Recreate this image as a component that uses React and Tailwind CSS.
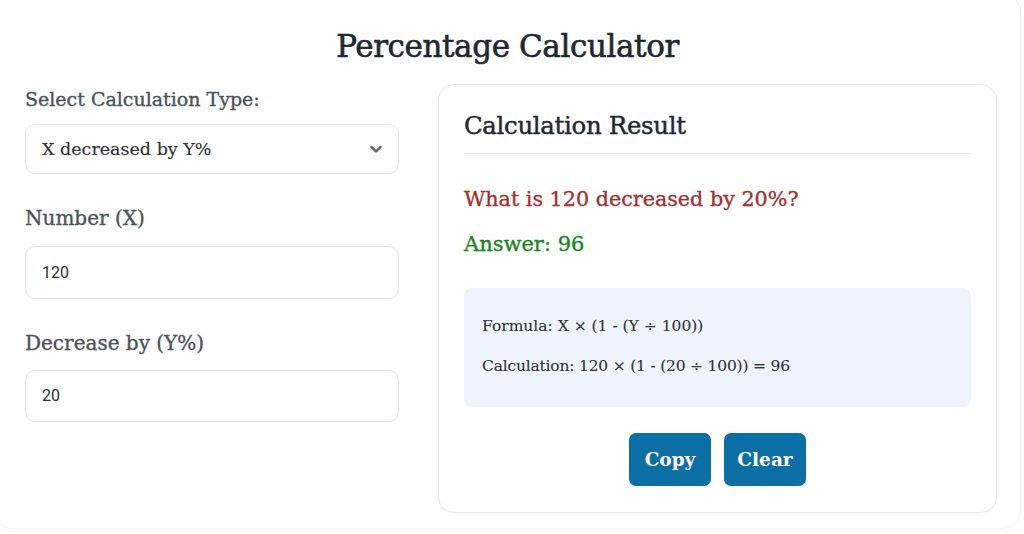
import React from 'react';

const slab = { fontFamily: '"DejaVu Serif", "Liberation Serif", serif' };

const InputBox = ({ value, h = 'h-[53px]' }) => (
  <div className={`${h} rounded-[10px] border border-[#e3e5e8] flex items-center px-4 text-[16px] text-[#2b2f33] font-['Roboto',sans-serif] [-webkit-text-stroke:0px]`}>
    {value}
  </div>
);

export default function App() {
  return (
    <div className="w-[1024px] h-[534px] bg-white overflow-hidden [-webkit-text-stroke:0.35px]" style={slab}>
      <div className="ml-[-6px] mt-[-6px] w-[1027px] h-[535px] rounded-[18px] border border-[#f1f1f1] pt-[33px]">
        <h1 className="text-center text-[31px] leading-[36px] text-[#1e2833] tracking-[-0.4px] [-webkit-text-stroke:0.6px]">Percentage Calculator</h1>

        <div className="flex gap-[39px] pl-[30px] pr-[23px] mt-[20px]">
          {/* inputs */}
          <div className="w-[374px] pt-[6px] flex flex-col">
            <label className="text-[#4b5259] text-[19px] leading-none mb-[15px]">Select Calculation Type:</label>
            <div className="h-[50px] rounded-[10px] border border-[#e3e5e8] flex items-center justify-between pl-4 pr-[14px] text-[17.5px] text-[#2b2f33] [-webkit-text-stroke:0.15px]">
              <span>X decreased by Y%</span>
              <svg width="16" height="16" viewBox="0 0 16 16" fill="none" stroke="#5a6068" strokeWidth="2.4" strokeLinecap="round" strokeLinejoin="round">
                <path d="M3.5 6l4.5 4.5L12.5 6" />
              </svg>
            </div>

            <label className="mt-[34px] mb-[18px] text-[#4b5259] text-[20px] leading-none">Number (X)</label>
            <InputBox value="120" />

            <label className="mt-[34px] mb-[17px] text-[#4b5259] text-[20px] leading-none">Decrease by (Y%)</label>
            <InputBox value="20" h="h-[52px]" />
          </div>

          {/* result card */}
          <div className="flex-1 h-[429px] rounded-[16px] border border-[#e8e9eb] px-[25px] pt-[29px] shadow-[0_1px_3px_rgba(0,0,0,0.03)]">
            <h2 className="text-[24.4px] leading-none text-[#1e2833] pb-[15px] border-b border-[#e9eaec] tracking-[-0.3px] [-webkit-text-stroke:0.45px]">Calculation Result</h2>
            <p className="mt-[35px] text-[20.7px] leading-none text-[#a2302e]">What is 120 decreased by 20%?</p>
            <p className="mt-[24px] text-[21px] leading-none text-[#16841a]">Answer: 96</p>

            <div className="mt-[33px] h-[119px] rounded-[8px] bg-[#eef3fd] px-[18px] pt-[31px] text-[15.5px] leading-none text-[#2d3136] [-webkit-text-stroke:0.1px]">
              <p>Formula: X × (1 - (Y ÷ 100))</p>
              <p className="mt-[24px] tracking-[-0.2px]">Calculation: 120 × (1 - (20 ÷ 100)) = 96</p>
            </div>

            <div className="flex justify-center gap-[13px] mt-[26px] [-webkit-text-stroke:0px]">
              <button className="h-[53px] w-[82px] rounded-[7px] bg-[#0b6ea5] text-white text-[18.5px] font-bold">Copy</button>
              <button className="h-[53px] w-[82px] rounded-[7px] bg-[#0b6ea5] text-white text-[18.5px] font-bold">Clear</button>
            </div>
          </div>
        </div>
      </div>
    </div>
  );
}
